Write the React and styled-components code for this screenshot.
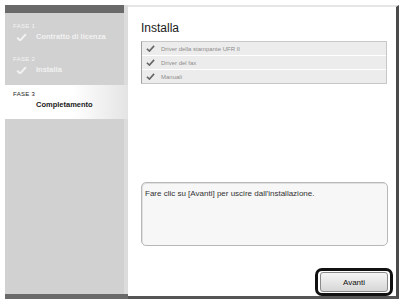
import React from "react";
import styled, { createGlobalStyle } from "styled-components";

const GlobalStyle = createGlobalStyle`
  html, body {
    margin: 0;
    padding: 0;
    background: #ffffff;
  }
  #root {
    width: 401px;
    height: 301px;
  }
`;

const Frame = styled.div`
  box-sizing: border-box;
  width: 401px;
  height: 301px;
  padding: 5px 2px 2px 5px;
  display: flex;
  font-family: "Liberation Sans", Arial, sans-serif;
`;

const Sidebar = styled.div`
  width: 123px;
  display: flex;
  flex-direction: column;
  background: #d1d1d1;
  border-right: 4px solid #dcdcdc;
  box-sizing: border-box;
`;

const SideTop = styled.div`
  height: 8px;
  background: #6a6a6a;
`;

const SideBottom = styled.div`
  height: 5px;
  background: #6a6a6a;
  margin-right: -4px;
`;

const Steps = styled.div`
  flex: 1;
  display: flex;
  flex-direction: column;
  padding-top: 6px;
`;

const Step = styled.div`
  padding: ${(p) => (p.active ? "5px 0 9px 8px" : "3px 0 6px 8px")};
  margin-bottom: ${(p) => (p.active ? "0" : "4px")};
  margin-right: ${(p) => (p.active ? "-4px" : "0")};
  background: ${(p) =>
    p.active ? "linear-gradient(90deg, #ffffff 55%, #e4e4e4 100%)" : "transparent"};
`;

const StepLabel = styled.div`
  font-size: 6px;
  letter-spacing: 0.3px;
  color: ${(p) => (p.active ? "#1a1a1a" : "#f4f4f4")};
  line-height: 8px;
`;

const StepName = styled.div`
  display: flex;
  align-items: center;
  gap: 9px;
  margin-top: 2px;
  padding-left: ${(p) => (p.active ? "23px" : "3px")};
  font-size: 7.5px;
  font-weight: bold;
  color: ${(p) => (p.active ? "#1a1a1a" : "#f2f2f2")};
  line-height: 10px;
`;

const Content = styled.div`
  flex: 1;
  display: flex;
  flex-direction: column;
  background: #ffffff;
  border-top: 2px solid #e6e6e6;
  border-right: 3px solid #4a4a4a;
  border-bottom: 3px solid #555;
  padding: 13px 6px 0 13px;
`;

const Title = styled.div`
  font-size: 12px;
  color: #1a1a1a;
  line-height: 16px;
  margin-bottom: 5px;
`;

const List = styled.div`
  border: 1px solid #c8c8c8;
  border-left: 1px solid #a0a0a0;
  display: flex;
  flex-direction: column;
  margin-right: 3px;
`;

const Item = styled.div`
  display: flex;
  align-items: center;
  gap: 6px;
  height: 13px;
  padding-left: 4px;
  background: #ececec;
  border-top: ${(p) => (p.first ? "none" : "1px solid #ffffff")};
  font-size: 6px;
  color: #8c8c8c;
`;

const Spacer = styled.div`
  flex: 1;
`;

const Message = styled.div`
  box-sizing: border-box;
  height: 64px;
  border: 1px solid #b8b8b8;
  border-radius: 5px;
  background: #f7f7f7;
  box-shadow: inset 1px 1px 0 #e0e0e0;
  padding: 6px 3px;
  font-size: 8px;
  color: #333;
  margin-right: 2px;
`;

const Footer = styled.div`
  display: flex;
  justify-content: flex-end;
  margin-top: 22px;
`;

const Highlight = styled.div`
  border: 3px solid #111;
  border-radius: 7px;
  padding: 1px 2px;
  margin-right: -3px;
`;

const Button = styled.div`
  width: 66px;
  height: 18px;
  display: flex;
  align-items: center;
  justify-content: center;
  border: 1px solid #8a8a8a;
  border-radius: 3px;
  background: linear-gradient(180deg, #f6f6f6 0%, #e6e6e6 50%, #d6d6d6 100%);
  font-size: 8px;
  color: #111;
`;

const Check = ({ color = "#f0f0f0", size = 10 }) => (
  <svg width={size} height={size * 0.8} viewBox="0 0 10 8">
    <path d="M1 4.2 L3.8 6.8 L9 1" fill="none" stroke={color} strokeWidth="1.8" />
  </svg>
);

const steps = [
  { label: "FASE 1", name: "Contratto di licenza", done: true },
  { label: "FASE 2", name: "Installa", done: true },
  { label: "FASE 3", name: "Completamento", active: true },
];

const items = ["Driver della stampante UFR II", "Driver del fax", "Manuali"];

export default function App() {
  return (
    <>
      <GlobalStyle />
      <Frame>
        <Sidebar>
          <SideTop />
          <Steps>
            {steps.map((s) => (
              <Step key={s.label} active={s.active}>
                <StepLabel active={s.active}>{s.label}</StepLabel>
                <StepName active={s.active}>
                  {s.done && <Check color="#f2f2f2" size={11} />}
                  {s.name}
                </StepName>
              </Step>
            ))}
          </Steps>
          <SideBottom />
        </Sidebar>
        <Content>
          <Title>Installa</Title>
          <List>
            {items.map((it, i) => (
              <Item key={it} first={i === 0}>
                <Check color="#666" size={9} />
                {it}
              </Item>
            ))}
          </List>
          <Spacer />
          <Message>Fare clic su [Avanti] per uscire dall'installazione.</Message>
          <Footer>
            <Highlight>
              <Button>Avanti</Button>
            </Highlight>
          </Footer>
        </Content>
      </Frame>
    </>
  );
}
